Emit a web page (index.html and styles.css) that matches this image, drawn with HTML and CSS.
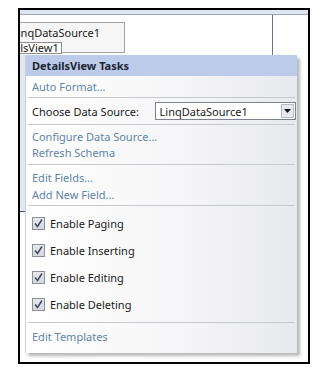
FILE: index.html
```html
<!DOCTYPE html>
<html lang="en">
<head>
    <meta charset="UTF-8">
    <meta name="viewport" content="width=device-width, initial-scale=1.0">
    <title>DetailsView Tasks</title>
    <link rel="stylesheet" href="styles.css">
</head>
<body>
    <div class="frame">
        <div class="designerTop"></div>
        <div class="canvas">
            <div class="dsBox">
                <p class="dsName">LinqDataSource1</p>
                <p class="dsTag">DetailsView1</p>
            </div>
        </div>

        <div class="tagStrip"></div>

        <div class="tasks">
            <div class="tasksHeader">DetailsView Tasks</div>
            <div class="tasksBody">
                <div class="section autoFormat">
                    <a class="taskLink">Auto Format...</a>
                </div>
                <div class="section chooseRow">
                    <span class="label">Choose Data Source:</span>
                    <div class="dropdown">
                        <span class="dropdownText">LinqDataSource1</span>
                        <span class="dropdownBtn">
                            <svg width="7" height="4" viewBox="0 0 7 4"><path d="M0 0h7L3.5 4z" fill="#111"/></svg>
                        </span>
                    </div>
                </div>
                <div class="section linkGroup">
                    <a class="taskLink">Configure Data Source...</a>
                    <a class="taskLink">Refresh Schema</a>
                </div>
                <div class="section linkGroup fields">
                    <a class="taskLink">Edit Fields...</a>
                    <a class="taskLink">Add New Field...</a>
                </div>
                <div class="section checks">
                    <label class="checkRow"><span class="checkBox"><svg width="11" height="11" viewBox="0 0 11 11"><path d="M2 5.5l2.5 3L9 1.5" fill="none" stroke="#3d4a66" stroke-width="1.5"/></svg></span>Enable Paging</label>
                    <label class="checkRow"><span class="checkBox"><svg width="11" height="11" viewBox="0 0 11 11"><path d="M2 5.5l2.5 3L9 1.5" fill="none" stroke="#3d4a66" stroke-width="1.5"/></svg></span>Enable Inserting</label>
                    <label class="checkRow"><span class="checkBox"><svg width="11" height="11" viewBox="0 0 11 11"><path d="M2 5.5l2.5 3L9 1.5" fill="none" stroke="#3d4a66" stroke-width="1.5"/></svg></span>Enable Editing</label>
                    <label class="checkRow"><span class="checkBox"><svg width="11" height="11" viewBox="0 0 11 11"><path d="M2 5.5l2.5 3L9 1.5" fill="none" stroke="#3d4a66" stroke-width="1.5"/></svg></span>Enable Deleting</label>
                </div>
                <div class="section lastSection">
                    <a class="taskLink">Edit Templates</a>
                </div>
            </div>
        </div>
    </div>
</body>
</html>
```

FILE: styles.css
```css
body {
    margin: 0;
    background: #ffffff;
    font-family: "Noto Sans", "Open Sans", sans-serif;
    font-size: 11px;
    color: #1a1a1a;
}

.frame {
    position: relative;
    margin: 8px 0 0 18px;
    width: 288px;
    height: 352px;
    border: 2px solid #000000;
    background: #ffffff;
    overflow: hidden;
}

.designerTop {
    height: 4px;
    background: #dfe5f1;
    border-bottom: 1px solid #9aa7bd;
}

.canvas {
    width: 253px;
    height: 120px;
    border-right: 1px solid #6d7382;
    padding-top: 7px;
    box-sizing: border-box;
}

.dsBox {
    width: 119px;
    height: 31px;
    margin-left: -14px;
    background: #f6f6f6;
    border: 1px solid #a3a3a3;
    box-sizing: border-box;
    padding: 3px 0 0 5px;
}

.dsBox p {
    margin: 0;
    font-size: 11px;
    color: #202020;
}

.dsBox .dsName {
    line-height: 14px;
}

.dsBox .dsTag {
    display: inline-block;
    margin-left: -22px;
    padding: 0 2px;
    line-height: 9px;
    height: 10px;
    border: 1px solid #8c8c8c;
    background: #ffffff;
}

.tagStrip {
    position: absolute;
    left: 0;
    top: 45px;
    width: 5px;
    height: 156px;
    background: #e2e7f0;
    border-bottom: 1px solid #4f5b70;
}

/* the tasks popup sits over the designer surface */
.tasks {
    position: absolute;
    left: 5px;
    top: 45px;
    width: 272px;
    box-shadow: 3px 3px 3px rgba(0, 0, 0, 0.28);
    border-left: 1px solid #c9d0dc;
    box-sizing: border-box;
}

.tasksHeader {
    height: 21px;
    line-height: 21px;
    padding-left: 6px;
    background: #bccbe9;
    font-weight: bold;
    color: #1b2433;
}

.tasksBody {
    background: linear-gradient(to right, #ffffff, #f5f5f7 60%, #e8e9ed);
    padding: 0 2px 0 2px;
}

.section {
    display: flex;
    flex-direction: column;
    border-bottom: 1px solid #c6c9ce;
    padding: 0 4px;
}

.taskLink {
    color: #5f84a9;
    line-height: 16px;
}

.autoFormat {
    height: 21px;
    justify-content: center;
}

.chooseRow {
    flex-direction: row;
    align-items: center;
    height: 27px;
    padding-right: 0;
    box-sizing: border-box;
}

.label {
    width: 124px;
}

.dropdown {
    display: flex;
    align-items: center;
    width: 143px;
    height: 18px;
    margin-left: auto;
    margin-right: -1px;
    border: 1px solid #7c8290;
    background: #ffffff;
    box-sizing: border-box;
    padding-left: 4px;
}

.dropdownText {
    flex: 1;
}

.dropdownBtn {
    display: flex;
    align-items: center;
    justify-content: center;
    width: 13px;
    height: 14px;
    margin-right: 1px;
    background: #e6e8ec;
    border: 1px solid #b8bcc4;
    box-sizing: border-box;
}

.linkGroup {
    padding-top: 4px;
    padding-bottom: 3px;
}

.fields {
    padding-top: 4px;
    padding-bottom: 2px;
}

.fields .taskLink {
    line-height: 17px;
}

.checks {
    padding-top: 4px;
    padding-bottom: 4px;
}

.checkRow {
    display: flex;
    align-items: center;
    height: 27px;
    gap: 5px;
}

.checkBox {
    display: flex;
    align-items: center;
    justify-content: center;
    width: 13px;
    height: 13px;
    border: 1px solid #8b8f98;
    background: linear-gradient(#e9e9ec, #d6d7dc);
    box-sizing: border-box;
}

.lastSection {
    border-bottom: none;
    padding-top: 5px;
    padding-bottom: 7px;
}

.lastSection .taskLink {
    line-height: 18px;
}
```
